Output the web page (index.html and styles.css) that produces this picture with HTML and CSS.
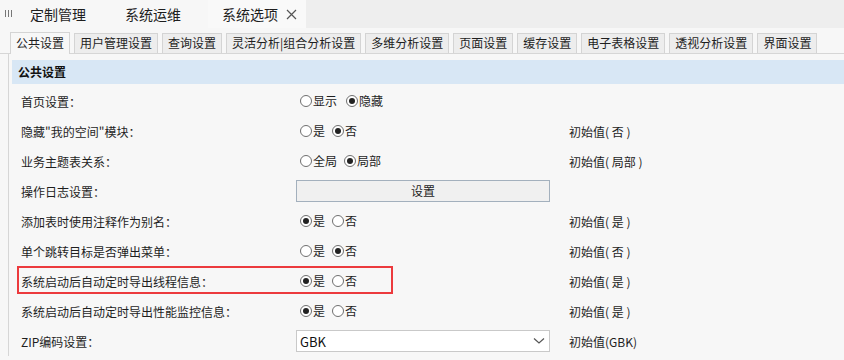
FILE: index.html
```html
<!DOCTYPE html>
<html lang="zh-CN">
<head>
<meta charset="utf-8">
<title>系统选项</title>
<link rel="stylesheet" href="styles.css">
</head>
<body>
<div class="topbar">
  <div class="grip"><span></span><span></span><span></span></div>
  <div class="ttab t1">定制管理</div>
  <div class="ttab t2">系统运维</div>
  <div class="ttab active">系统选项<svg class="close" width="11" height="11" viewBox="0 0 11 11"><path d="M1 1 L10 10 M10 1 L1 10" stroke="#555" stroke-width="1.2" fill="none"/></svg></div>
  <div class="fill"></div>
</div>
<div class="subtabs">
  <div class="stab on">公共设置</div>
  <div class="stab">用户管理设置</div>
  <div class="stab">查询设置</div>
  <div class="stab">灵活分析|组合分析设置</div>
  <div class="stab">多维分析设置</div>
  <div class="stab">页面设置</div>
  <div class="stab">缓存设置</div>
  <div class="stab">电子表格设置</div>
  <div class="stab">透视分析设置</div>
  <div class="stab">界面设置</div>
</div>
<div class="panel">
  <div class="head">公共设置</div>
  <div class="row">
    <div class="lbl">首页设置：</div>
    <div class="ctl"><span class="radio"></span><span class="opt wide">显示</span><span class="radio on"></span><span class="opt">隐藏</span></div>
    <div class="init"></div>
  </div>
  <div class="row">
    <div class="lbl">隐藏"我的空间"模块：</div>
    <div class="ctl"><span class="radio"></span><span class="opt">是</span><span class="radio on"></span><span class="opt">否</span></div>
    <div class="init">初始值( 否 )</div>
  </div>
  <div class="row">
    <div class="lbl">业务主题表关系：</div>
    <div class="ctl"><span class="radio"></span><span class="opt">全局</span><span class="radio on"></span><span class="opt">局部</span></div>
    <div class="init">初始值( 局部 )</div>
  </div>
  <div class="row">
    <div class="lbl">操作日志设置：</div>
    <div class="ctl"><div class="btn">设置</div></div>
    <div class="init"></div>
  </div>
  <div class="row">
    <div class="lbl">添加表时使用注释作为别名：</div>
    <div class="ctl"><span class="radio on"></span><span class="opt">是</span><span class="radio"></span><span class="opt">否</span></div>
    <div class="init">初始值( 是 )</div>
  </div>
  <div class="row">
    <div class="lbl">单个跳转目标是否弹出菜单：</div>
    <div class="ctl"><span class="radio"></span><span class="opt">是</span><span class="radio on"></span><span class="opt">否</span></div>
    <div class="init">初始值( 否 )</div>
  </div>
  <div class="row">
    <div class="lbl">系统启动后自动定时导出线程信息：</div>
    <div class="ctl"><span class="radio on"></span><span class="opt">是</span><span class="radio"></span><span class="opt">否</span></div>
    <div class="init">初始值( 是 )</div>
    <div class="mark"></div>
  </div>
  <div class="row">
    <div class="lbl">系统启动后自动定时导出性能监控信息：</div>
    <div class="ctl"><span class="radio on"></span><span class="opt">是</span><span class="radio"></span><span class="opt">否</span></div>
    <div class="init">初始值( 是 )</div>
  </div>
  <div class="row">
    <div class="lbl">ZIP编码设置：</div>
    <div class="ctl"><div class="select"><span>GBK</span><svg class="chev" width="12" height="8" viewBox="0 0 12 8"><path d="M1 1.5 L6 6 L11 1.5" fill="none" stroke="#555" stroke-width="1.2"/></svg></div></div>
    <div class="init">初始值(GBK)</div>
  </div>
</div>
</body>
</html>
```

FILE: styles.css
```css
html, body {
  margin: 0;
  padding: 0;
}
body {
  width: 844px;
  height: 360px;
  overflow: hidden;
  background: #f7f7f7;
  font-family: "Noto Sans CJK SC", "Noto Sans", sans-serif;
  font-size: 12px;
  color: #1e1e1e;
}
.topbar {
  display: flex;
  height: 28px;
  align-items: stretch;
}
.grip {
  width: 22px;
  display: flex;
  gap: 2px;
  padding: 10px 0 0 5px;
  box-sizing: border-box;
}
.grip span {
  width: 1px;
  height: 7px;
  background: #777;
}
.ttab {
  font-size: 14px;
  line-height: 28px;
  color: #1e1e1e;
}
.t1 {
  padding-left: 8px;
  width: 95px;
}
.t2 {
  width: 83px;
}
.ttab.active {
  width: 84px;
  padding-left: 14px;
  background: #f9f9f9;
  display: flex;
  align-items: center;
}
.close {
  margin-left: 8px;
  display: block;
}
.fill {
  flex: 1;
  background: #eeeeee;
}
.subtabs {
  display: flex;
  gap: 4px;
  padding: 5px 0 0 10px;
  height: 20px;
  border-bottom: 1px solid #d6d6d6;
  position: relative;
}
.stab {
  height: 19px;
  line-height: 18px;
  padding: 0 5px;
  border: 1px solid #d4d4d4;
  border-bottom: none;
  background: #ededed;
  white-space: nowrap;
}
.stab.on {
  background: #f7f7f7;
  height: 20px;
  margin-top: -1px;
  margin-bottom: -1px;
  padding-top: 1px;
  line-height: 18px;
}
.panel {
  margin-left: 8px;
  border-left: 1px solid #d6d6d6;
  padding-top: 6px;
}
.head {
  margin-left: 3px;
  height: 24px;
  line-height: 24px;
  background: #d8e7f5;
  font-weight: bold;
  padding-left: 6px;
  color: #111;
  margin-bottom: 2px;
}
.row {
  position: relative;
  display: grid;
  grid-template-columns: 275px 273px 1fr;
  height: 30px;
  align-items: center;
  padding-left: 12px;
}
.lbl {
  white-space: nowrap;
}
.ctl {
  display: flex;
  align-items: center;
}
.radio {
  width: 10px;
  height: 10px;
  border: 1px solid #6f6f6f;
  border-radius: 50%;
  background: #fff;
  box-sizing: content-box;
  margin-left: 4px;
  margin-right: 1px;
  position: relative;
}
.opt + .radio {
  margin-left: 7px;
}
.radio.on::after {
  content: "";
  position: absolute;
  left: 2px;
  top: 2px;
  width: 6px;
  height: 6px;
  border-radius: 50%;
  background: #222;
}
.opt {
  line-height: 16px;
}
.opt.wide {
  margin-right: 2px;
}
.init {
  white-space: nowrap;
}
.btn {
  width: 252px;
  height: 20px;
  line-height: 20px;
  border: 1px solid #a3b0bd;
  background: #f0f0f0;
  text-align: center;
}
.select {
  width: 245px;
  height: 20px;
  border: 1px solid #c9c9c9;
  background: #fff;
  display: flex;
  align-items: center;
  justify-content: space-between;
  padding: 0 4px 0 3px;
  box-sizing: content-box;
}
.select span {
  font-size: 13px;
  color: #111;
}
.chev {
  display: block;
}
.mark {
  position: absolute;
  left: 8px;
  top: 0;
  width: 372px;
  height: 24px;
  border: 2px solid #ec3a3d;
}
```
